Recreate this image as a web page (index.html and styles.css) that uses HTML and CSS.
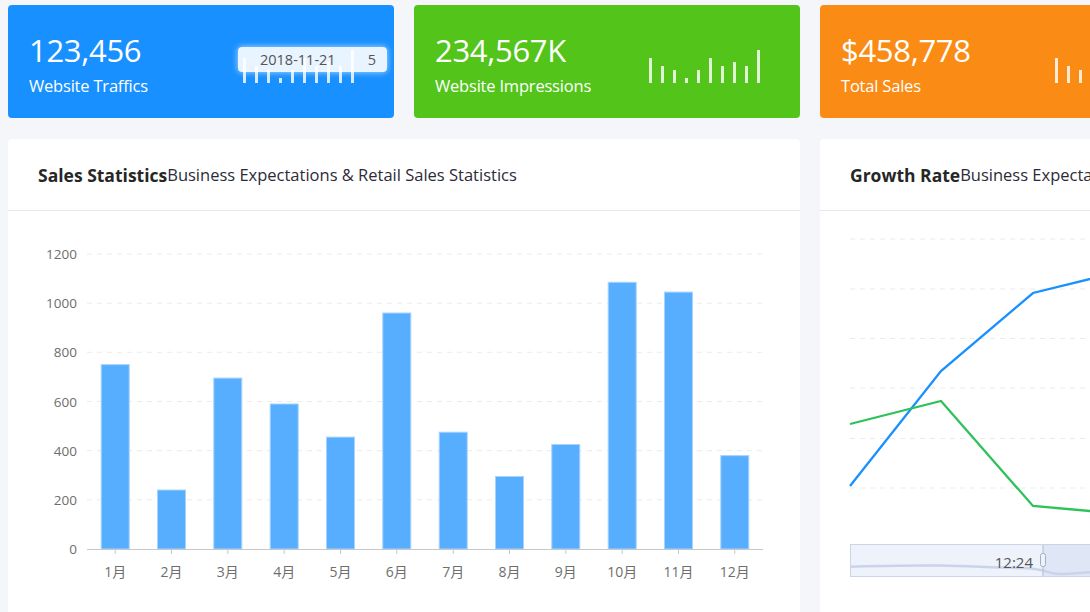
FILE: index.html
```html
<!DOCTYPE html>
<html lang="en">
<head>
<meta charset="utf-8">
<title>Dashboard</title>
<link rel="stylesheet" href="styles.css">
</head>
<body>
<div class="page">
  <div class="card card-blue">
    <div class="card-text">
      <div class="card-num">123,456</div>
      <div class="card-label">Website Traffics</div>
    </div>
    <div class="spark">
      <i style="height:25px"></i><i style="height:17px"></i><i style="height:13px"></i><i style="height:5px"></i><i style="height:13px"></i><i style="height:25px"></i><i style="height:17px"></i><i style="height:21px"></i><i style="height:17px"></i><i style="height:33px"></i>
    </div>
    <div class="tip"><span>2018-11-21</span><span>5</span></div>
  </div>
  <div class="card card-green">
    <div class="card-text">
      <div class="card-num">234,567K</div>
      <div class="card-label">Website Impressions</div>
    </div>
    <div class="spark">
      <i style="height:25px"></i><i style="height:17px"></i><i style="height:13px"></i><i style="height:5px"></i><i style="height:13px"></i><i style="height:25px"></i><i style="height:17px"></i><i style="height:21px"></i><i style="height:17px"></i><i style="height:33px"></i>
    </div>
  </div>
  <div class="card card-orange">
    <div class="card-text">
      <div class="card-num">$458,778</div>
      <div class="card-label">Total Sales</div>
    </div>
    <div class="spark">
      <i style="height:25px"></i><i style="height:17px"></i><i style="height:13px"></i><i style="height:5px"></i><i style="height:13px"></i><i style="height:25px"></i><i style="height:17px"></i><i style="height:21px"></i><i style="height:17px"></i><i style="height:33px"></i>
    </div>
  </div>
  <div class="card card-blue card-hidden"></div>

  <section class="panel">
    <header class="panel-head"><b>Sales Statistics</b><span>Business Expectations &amp; Retail Sales Statistics</span></header>
    <svg class="chart" width="792" height="400" viewBox="0 0 792 400">
      <g class="grid">
        <line x1="79" y1="43" x2="755" y2="43"/>
        <line x1="79" y1="92.2" x2="755" y2="92.2"/>
        <line x1="79" y1="141.3" x2="755" y2="141.3"/>
        <line x1="79" y1="190.5" x2="755" y2="190.5"/>
        <line x1="79" y1="239.7" x2="755" y2="239.7"/>
        <line x1="79" y1="288.8" x2="755" y2="288.8"/>
      </g>
      <g class="ylab">
        <text x="69" y="48">1200</text>
        <text x="69" y="97.2">1000</text>
        <text x="69" y="146.3">800</text>
        <text x="69" y="195.5">600</text>
        <text x="69" y="244.7">400</text>
        <text x="69" y="293.8">200</text>
        <text x="69" y="343">0</text>
      </g>
      <g class="bars">
        <rect x="93.2" y="153.6" width="28" height="184.4"/>
        <rect x="149.5" y="279" width="28" height="59"/>
        <rect x="205.8" y="167.1" width="28" height="170.9"/>
        <rect x="262.2" y="193" width="28" height="145"/>
        <rect x="318.5" y="226.1" width="28" height="111.9"/>
        <rect x="374.8" y="102" width="28" height="236"/>
        <rect x="431.2" y="221.2" width="28" height="116.8"/>
        <rect x="487.5" y="265.5" width="28" height="72.5"/>
        <rect x="543.8" y="233.5" width="28" height="104.5"/>
        <rect x="600.2" y="71.3" width="28" height="266.7"/>
        <rect x="656.5" y="81.1" width="28" height="256.9"/>
        <rect x="712.8" y="244.6" width="28" height="93.4"/>
      </g>
      <line class="axis" x1="79" y1="338.5" x2="755" y2="338.5"/>
      <g class="ticks">
        <line x1="107.2" y1="338" x2="107.2" y2="343"/>
        <line x1="163.5" y1="338" x2="163.5" y2="343"/>
        <line x1="219.8" y1="338" x2="219.8" y2="343"/>
        <line x1="276.2" y1="338" x2="276.2" y2="343"/>
        <line x1="332.5" y1="338" x2="332.5" y2="343"/>
        <line x1="388.8" y1="338" x2="388.8" y2="343"/>
        <line x1="445.2" y1="338" x2="445.2" y2="343"/>
        <line x1="501.5" y1="338" x2="501.5" y2="343"/>
        <line x1="557.8" y1="338" x2="557.8" y2="343"/>
        <line x1="614.2" y1="338" x2="614.2" y2="343"/>
        <line x1="670.5" y1="338" x2="670.5" y2="343"/>
        <line x1="726.8" y1="338" x2="726.8" y2="343"/>
      </g>
      <g class="xlab">
        <text x="107.2" y="365.5">1月</text>
        <text x="163.5" y="365.5">2月</text>
        <text x="219.8" y="365.5">3月</text>
        <text x="276.2" y="365.5">4月</text>
        <text x="332.5" y="365.5">5月</text>
        <text x="388.8" y="365.5">6月</text>
        <text x="445.2" y="365.5">7月</text>
        <text x="501.5" y="365.5">8月</text>
        <text x="557.8" y="365.5">9月</text>
        <text x="614.2" y="365.5">10月</text>
        <text x="670.5" y="365.5">11月</text>
        <text x="726.8" y="365.5">12月</text>
      </g>
    </svg>
  </section>

  <section class="panel">
    <header class="panel-head"><b>Growth Rate</b><span>Business Expectations &amp; Growth Rate Statistics</span></header>
    <svg class="chart" width="792" height="400" viewBox="0 0 792 400">
      <g class="grid">
        <line x1="30" y1="28" x2="762" y2="28"/>
        <line x1="30" y1="78" x2="762" y2="78"/>
        <line x1="30" y1="127.5" x2="762" y2="127.5"/>
        <line x1="30" y1="177" x2="762" y2="177"/>
        <line x1="30" y1="227.5" x2="762" y2="227.5"/>
        <line x1="30" y1="277" x2="762" y2="277"/>
      </g>
      <polyline class="line-blue" points="30,275 121,160 213,82 304.5,59.5 396,50 487.5,40 579,35 670.5,30 762,28"/>
      <polyline class="line-green" points="30,213 121,190 213,295 304.5,303 396,250 487.5,230 579,240 670.5,210 762,200"/>
      <g class="slider">
        <rect class="slider-bg" x="30.5" y="333.5" width="731" height="32"/>
        <rect class="slider-sel" x="223" y="334" width="538" height="31"/>
        <path class="slider-shadow" d="M30 355.7 C 60 355, 90 354, 120 354.5 S 170 356.5, 200 357 S 225 363, 240 363 S 260 361, 290 360.7 S 330 350, 360 344"/>
        <line class="slider-edge" x1="223" y1="334" x2="223" y2="365"/>
        <rect class="slider-handle" x="220.5" y="342.5" width="5" height="13" rx="2"/>
        <text class="slider-label" x="213" y="357">12:24</text>
      </g>
    </svg>
  </section>
</div>
</body>
</html>
```

FILE: styles.css
```css
* { box-sizing: border-box; }

html, body {
  margin: 0;
  height: 100%;
  overflow: hidden;
}

body {
  background: #f4f6fa;
  font-family: "Open Sans", "Noto Sans", "Noto Sans CJK SC", sans-serif;
  color: #333;
}

.page {
  width: 1612px;
  padding: 5px 8px 0;
  display: grid;
  grid-template-columns: repeat(4, 386px);
  column-gap: 20px;
  row-gap: 21px;
}

.card {
  position: relative;
  height: 113px;
  border-radius: 4px;
  color: #fff;
  display: flex;
  justify-content: space-between;
  padding: 0 40px 0 21px;
}

.card-blue { background: #1890ff; }
.card-green { background: #52c41a; }
.card-orange { background: #fa8c16; }

.card-text {
  display: flex;
  flex-direction: column;
  padding-top: 25px;
}

.card-num {
  font-size: 31px;
  line-height: 40px;
  letter-spacing: -0.3px;
}

.card-label {
  font-size: 16.5px;
  line-height: 22px;
  margin-top: 5px;
  letter-spacing: -0.2px;
}

.spark {
  align-self: flex-end;
  margin-bottom: 35px;
  display: flex;
  align-items: flex-end;
  gap: 9px;
}

.spark i {
  display: block;
  width: 3px;
  background: rgba(255, 255, 255, 0.82);
}

.tip {
  position: absolute;
  left: 230px;
  top: 42px;
  width: 149px;
  height: 25px;
  padding: 0 11px 0 22px;
  border-radius: 4px;
  background: rgba(255, 255, 255, 0.9);
  box-shadow: 0 0 6px rgba(255, 255, 255, 0.7);
  display: flex;
  justify-content: space-between;
  align-items: center;
  font-size: 14.5px;
  color: #555;
}

.panel {
  grid-column: span 2;
  height: 480px;
  background: #fff;
  border-radius: 4px;
  overflow: hidden;
}

.panel-head {
  height: 72px;
  border-bottom: 1px solid #e8e8e8;
  padding-left: 30px;
  display: flex;
  align-items: center;
  white-space: nowrap;
  color: #2b2b38;
}

.panel-head b {
  font-size: 17.5px;
  font-weight: 700;
  color: #262626;
}

.panel-head span {
  font-size: 16.5px;
}

.chart {
  display: block;
  font-family: "Open Sans", "Noto Sans CJK SC", sans-serif;
}

.grid line {
  stroke: #ebebeb;
  stroke-width: 1;
  stroke-dasharray: 5 5;
}

.ylab text {
  text-anchor: end;
  font-size: 13.5px;
  fill: #6e6e6e;
}

.xlab text {
  text-anchor: middle;
  font-size: 14px;
  fill: #6e6e6e;
}

.bars rect {
  fill: #58aefe;
  stroke: #a6d3ff;
  stroke-width: 1;
}

.axis {
  stroke: #c8c8c8;
  stroke-width: 1;
}

.ticks line {
  stroke: #c8c8c8;
  stroke-width: 1;
}

.line-blue {
  fill: none;
  stroke: #1890ff;
  stroke-width: 2.3;
}

.line-green {
  fill: none;
  stroke: #2fc25b;
  stroke-width: 2.3;
}

.slider-bg {
  fill: #eef2fa;
  stroke: #ccd5e6;
  stroke-width: 1;
}

.slider-sel {
  fill: #dfe6f5;
}

.slider-shadow {
  fill: none;
  stroke: #c9d3ea;
  stroke-width: 2.5;
}

.slider-edge {
  stroke: #b3bdd3;
  stroke-width: 1;
}

.slider-handle {
  fill: #eef2fa;
  stroke: #a3aec4;
  stroke-width: 1;
}

.slider-label {
  text-anchor: end;
  font-size: 15px;
  fill: #555;
}
```
